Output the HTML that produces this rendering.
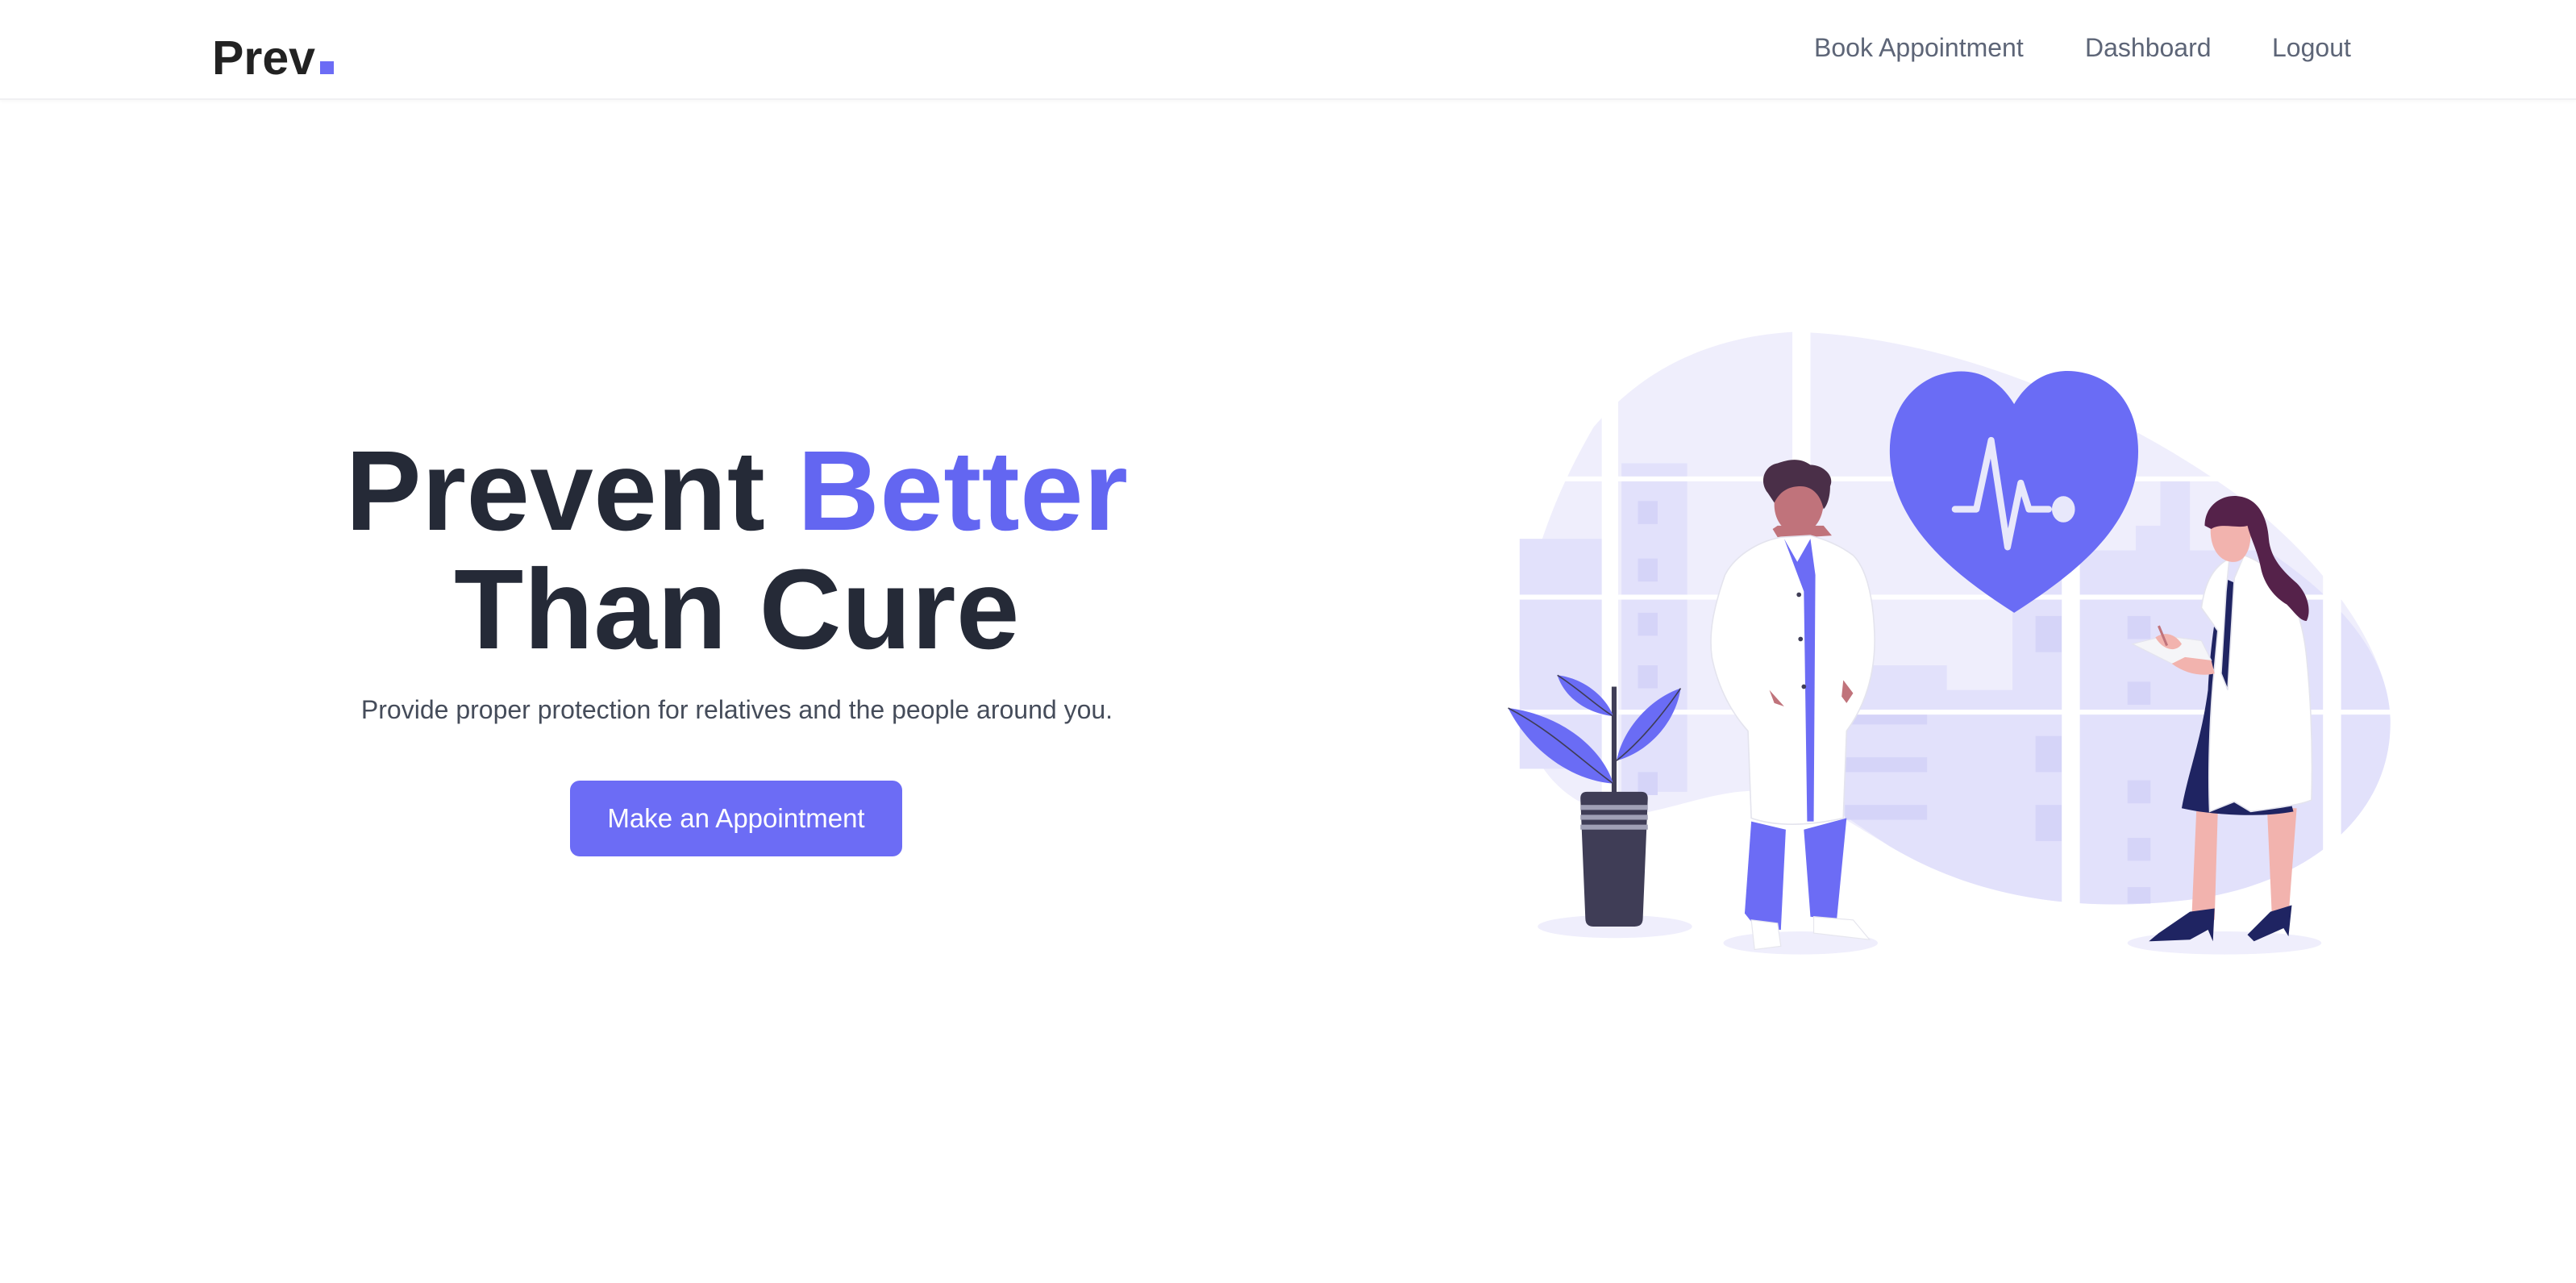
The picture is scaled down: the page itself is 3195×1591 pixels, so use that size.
<!DOCTYPE html>
<html><head><meta charset="utf-8"><style>
*{margin:0;padding:0;box-sizing:border-box}
html,body{width:3195px;height:1591px;background:#fff;overflow:hidden;font-family:"Liberation Sans",Arial,sans-serif}
.hdr{position:absolute;left:0;top:0;width:3195px;height:124px;border-bottom:2px solid #f0f0f2;box-shadow:0 2px 4px rgba(0,0,0,.03)}
.logo{position:absolute;left:263px;top:32px;font-size:59px;font-weight:bold;color:#222;line-height:80px}
.dot{position:absolute;left:397px;top:76px;width:17px;height:16px;background:#6c6cf5}
.nav{position:absolute;top:38px;font-size:32px;color:#5d6577;line-height:42px}
.h{position:absolute;left:0;width:1828px;text-align:center;font-size:141px;font-weight:bold;color:#252a37;line-height:143px;letter-spacing:0.5px}
.p{color:#6366f1}
.sub{position:absolute;left:0;width:1828px;top:860px;text-align:center;font-size:32px;color:#454c5a;line-height:40px}
.btn{position:absolute;left:707px;top:968px;width:412px;height:94px;border-radius:12px;background:#6c6cf5;color:#fff;font-size:33px;line-height:94px;text-align:center}
svg{position:absolute;left:0;top:0}
</style></head><body>
<svg width="3195" height="1591" viewBox="0 0 1568 781" preserveAspectRatio="none">
<path d="M1092,202 C1190,205 1290,250 1360,300 C1420,345 1455,400 1455,440 C1455,500 1400,540 1330,548 C1260,556 1200,545 1150,515 C1125,500 1110,490 1095,485 C1060,475 1035,488 1000,495 C960,500 930,470 926,430 C920,380 935,320 970,260 C1000,225 1040,205 1092,202 Z" fill="#efeefc"/>
<path d="M1120,405 L1185,405 L1185,420 L1225,420 L1225,350 L1262,350 L1262,335 L1300,335 L1300,320 L1315,320 L1315,290 L1333,290 L1333,335 L1380,335 C1425,365 1455,400 1455,440 C1455,500 1400,540 1330,548 C1260,556 1200,545 1150,515 C1135,505 1125,498 1120,495 Z" fill="#e2e1fb"/>
<rect x="925" y="328" width="50" height="140" fill="#e2e1fb"/>
<rect x="987" y="282" width="40" height="200" fill="#e2e1fb"/>
<g fill="#d5d4f8">
<rect x="997" y="305" width="12" height="14"/><rect x="997" y="340" width="12" height="14"/><rect x="997" y="373" width="12" height="14"/><rect x="997" y="405" width="12" height="14"/><rect x="997" y="470" width="12" height="14"/>
<rect x="1239" y="375" width="16" height="22"/><rect x="1239" y="448" width="16" height="22"/><rect x="1239" y="490" width="16" height="22"/>
<rect x="1295" y="375" width="14" height="14"/><rect x="1295" y="415" width="14" height="14"/><rect x="1295" y="475" width="14" height="14"/><rect x="1295" y="510" width="14" height="14"/><rect x="1295" y="540" width="14" height="10"/>
<rect x="1123" y="432" width="50" height="9"/><rect x="1123" y="461" width="50" height="9"/><rect x="1123" y="490" width="50" height="9"/>
</g>
<g fill="#fff">
<rect x="924" y="290" width="532" height="3"/><rect x="924" y="362" width="532" height="3"/><rect x="924" y="432" width="532" height="3"/>
<rect x="975" y="230" width="10" height="300"/><rect x="1091" y="200" width="11" height="300"/><rect x="1255" y="300" width="11" height="260"/><rect x="1414" y="320" width="11" height="240"/>
</g>
<path d="M1226,246 C1240,222 1262,224 1275,229 C1298,238 1305,265 1300,290 C1293,325 1262,350 1226,373 C1190,350 1160,325 1152,290 C1146,262 1156,238 1178,229 C1192,224 1212,223 1226,246 Z" fill="#6a6cf5"/>
<path d="M1190,310 L1203,310 L1212,268 L1222,333 L1230,294 L1235,310 L1247,310" fill="none" stroke="#e8e8fb" stroke-width="4" stroke-linecap="round" stroke-linejoin="round"/>
<ellipse cx="1256" cy="310" rx="7" ry="8" fill="#e8e8fb"/>
<ellipse cx="983" cy="564" rx="47" ry="7" fill="#efeefc"/>
<ellipse cx="1096" cy="574" rx="47" ry="7" fill="#efeefc"/>
<ellipse cx="1354" cy="574" rx="59" ry="7" fill="#efeefc"/>
<rect x="981" y="418" width="3" height="70" fill="#3f3d56"/>
<path d="M918,431 C950,435 975,455 982,477 C955,475 930,455 918,431 Z" fill="#6a6cf5"/>
<path d="M948,411 C965,413 978,425 982,436 C965,434 952,424 948,411 Z" fill="#6a6cf5"/>
<path d="M1023,419 C1020,440 1003,458 984,463 C988,443 1005,425 1023,419 Z" fill="#6a6cf5"/>
<g stroke="#3f3d56" stroke-width=".8" fill="none"><path d="M918,431 C945,445 965,465 982,477"/><path d="M948,411 C962,420 972,430 982,436"/><path d="M1023,419 C1012,435 998,452 984,463"/></g>
<path d="M966,482 L999,482 Q1003,482 1003,486 L1000,559 Q1000,564 995,564 L970,564 Q965,564 965,559 L962,486 Q962,482 966,482 Z" fill="#3f3d56"/>
<g fill="#a0a0b6"><rect x="962" y="490" width="41" height="3"/><rect x="962" y="496" width="41" height="3"/><rect x="962" y="502" width="41" height="3"/></g>
<path d="M1066,500 L1062,556 L1070,566 L1084,566 L1087,505 Z" fill="#6c6cf5"/>
<path d="M1098,505 L1102,558 L1118,560 L1124,498 Z" fill="#6c6cf5"/>
<path d="M1066,560 L1068,578 L1084,576 L1082,562 Z" fill="#fff" stroke="#e6e6ee" stroke-width=".6"/>
<path d="M1104,558 L1104,568 L1138,572 L1128,560 Z" fill="#fff" stroke="#e6e6ee" stroke-width=".6"/>
<path d="M1079,322 L1082,327 L1100,327 L1115,326 L1110,320 L1082,320 Z" fill="#c0737b"/>
<path d="M1084,327 C1068,330 1055,340 1050,350 C1043,370 1040,385 1042,400 C1046,420 1055,435 1064,445 L1066,498 C1080,503 1100,503 1122,498 L1124,445 C1135,430 1142,410 1141,385 C1140,360 1135,345 1128,338 C1120,332 1110,328 1102,326 Z" fill="#fff" stroke="#e4e4ee" stroke-width=".8"/>
<path d="M1086,328 L1095,352 L1098,360 L1100,500 L1104,500 L1105,350 L1102,328 L1094,342 Z" fill="#6c6cf5"/>
<circle cx="1095" cy="362" r="1.4" fill="#3f3d56"/><circle cx="1096" cy="389" r="1.4" fill="#3f3d56"/><circle cx="1098" cy="418" r="1.4" fill="#3f3d56"/>
<path d="M1077,420 L1086,430 L1080,428 Z" fill="#c0737b"/><path d="M1122,414 L1128,422 L1124,428 L1121,424 Z" fill="#c0737b"/>
<path d="M1080,297 C1080,288 1090,285 1096,287 C1105,288 1111,295 1110,305 C1110,318 1102,325 1095,325 C1087,325 1080,318 1080,307 Z" fill="#c0737b"/>
<path d="M1076,300 C1070,292 1075,283 1082,282 C1088,280 1095,278 1102,283 C1110,283 1117,290 1114,296 C1114,303 1112,308 1110,310 C1108,300 1102,296 1096,296 C1090,296 1084,298 1080,306 Z" fill="#4a2f48"/>
<path d="M1337,492 L1334,560 L1348,560 L1350,493 Z" fill="#f2b3ae"/>
<path d="M1380,492 L1383,560 L1393,558 L1398,492 Z" fill="#f2b3ae"/>
<path d="M1333,555 L1348,553 L1347,573 L1344,566 L1333,572 L1308,573 L1314,568 Z" fill="#1f2462"/>
<path d="M1382,555 L1395,551 L1393,570 L1390,565 L1372,573 L1368,569 Z" fill="#1f2462"/>
<path d="M1354,352 C1348,370 1345,400 1344,420 C1340,450 1332,470 1328,492 C1345,496 1375,498 1396,494 L1385,455 L1372,360 Z" fill="#1f2462"/>
<path d="M1357,340 C1347,345 1342,355 1340,370 L1350,384 L1347,416 C1345,440 1344,470 1345,494 L1360,488 L1370,494 C1385,492 1400,490 1407,487 C1408,450 1406,420 1404,400 C1402,380 1396,360 1385,350 C1380,345 1372,340 1366,338 L1360,352 L1356,420 L1352,410 L1355,360 Z" fill="#fff" stroke="#e4e4ee" stroke-width=".8"/>
<path d="M1298,392 L1318,387 L1340,390 L1346,402 L1322,404 Z" fill="#f5f5f8" stroke="#e4e4ee" stroke-width=".6"/>
<path d="M1312,388 C1316,395 1324,398 1328,392 C1324,386 1318,384 1312,388 Z" fill="#f2b3ae"/>
<path d="M1322,404 C1330,410 1340,412 1348,410 L1346,402 L1330,400 Z" fill="#f2b3ae"/>
<path d="M1314,381 L1319,393" stroke="#c0737b" stroke-width="1.5"/>
<path d="M1346,318 C1344,330 1349,341 1358,342 C1366,343 1370,335 1370,325 C1370,316 1365,310 1357,310 C1350,310 1347,313 1346,318 Z" fill="#f2b3ae"/>
<path d="M1342,320 C1342,308 1352,301 1362,302 C1374,303 1380,314 1381,328 C1382,340 1390,348 1398,355 C1405,362 1407,372 1404,378 C1400,378 1396,372 1392,368 C1385,364 1378,356 1376,345 C1374,335 1370,328 1368,320 C1362,322 1352,318 1346,322 Z" fill="#55224a"/>
</svg>
<div class="hdr"></div>
<div class="logo">Prev</div><div class="dot"></div>
<div class="nav" style="left:2250px">Book Appointment</div>
<div class="nav" style="left:2586px">Dashboard</div>
<div class="nav" style="left:2818px">Logout</div>
<div class="h" style="top:537px">Prevent <span class="p">Better</span></div>
<div class="h" style="top:684px">Than Cure</div>
<div class="sub">Provide proper protection for relatives and the people around you.</div>
<div class="btn">Make an Appointment</div>
</body></html>
